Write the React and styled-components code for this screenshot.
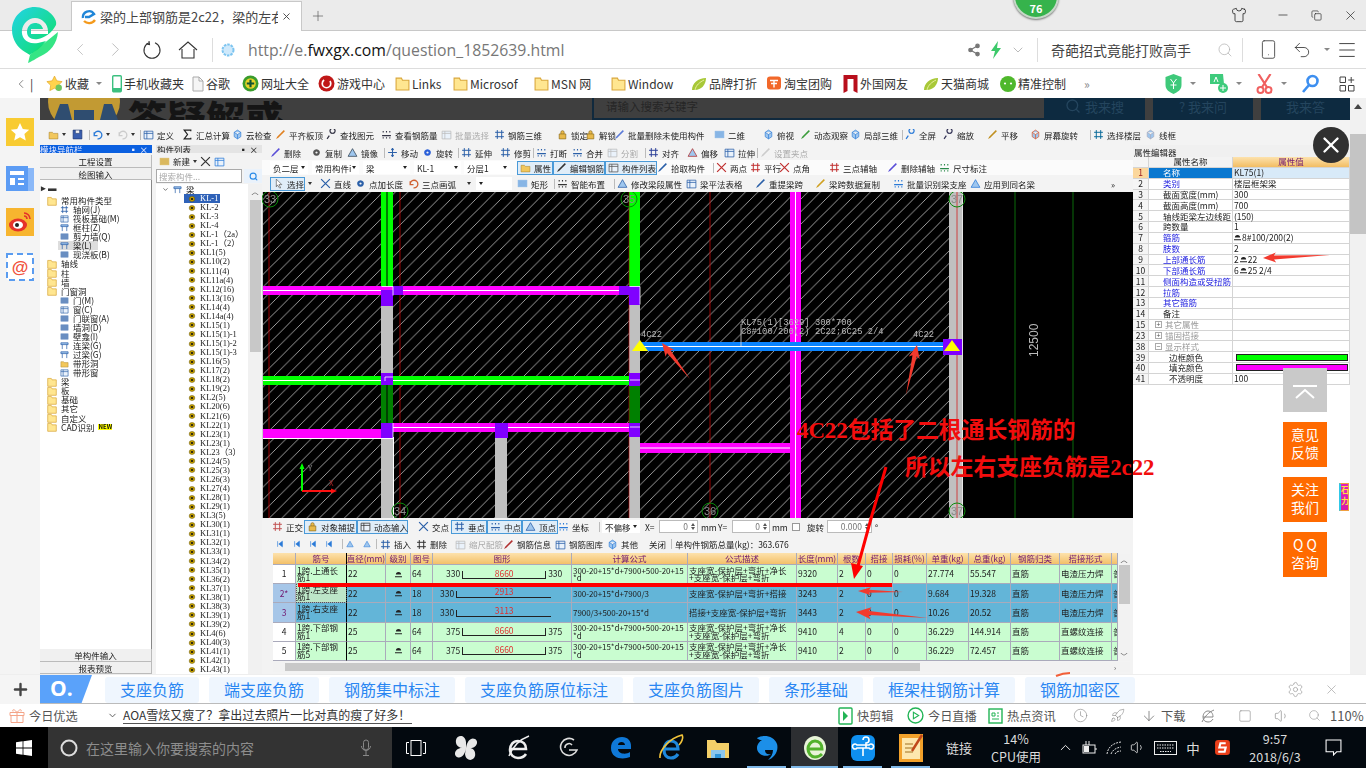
import React from "react";
import styled, { createGlobalStyle } from "styled-components";
import { ChevronLeft, ChevronRight, ChevronDown, Share2, Search, Smartphone, Undo2, Menu, Shirt, Minus, Copy, X, Plus, ArrowDown, Settings, Volume1, Rocket, Square, Clock } from "lucide-react";

const CJK = `"Noto Sans CJK SC", "Noto Sans", sans-serif`;

const GlobalStyle = createGlobalStyle`
  html, body { margin: 0; padding: 0; width: 1366px; height: 768px; overflow: hidden; background: #fff; }
  body { font-family: ${CJK}; }
  * { box-sizing: border-box; }
`;

/* ---------- browser chrome ---------- */
const Page = styled.div`
  position: relative;
  width: 1366px;
  height: 768px;
  display: flex;
  flex-direction: column;
  overflow: hidden;
`;
const TabStrip = styled.div`
  height: 31px;
  flex: none;
  background: #ebebeb;
  border-bottom: 1px solid #c8c8c8;
  display: flex;
  align-items: flex-end;
  padding-left: 71px;
  color: #333;
`;
const Tab = styled.div`
  width: 231px;
  height: 30px;
  margin-bottom: -1px;
  background: #fff;
  border: 1px solid #c8c8c8;
  border-bottom: none;
  display: flex;
  align-items: center;
  padding: 0 9px;
  gap: 3px;
  font-size: 13px;
  span { flex: 1; overflow: hidden; white-space: nowrap; color: #444; }
`;
const NewTab = styled.div`
  margin: 0 0 6px 8px;
  color: #555;
  display: flex;
`;
const WinButtons = styled.div`
  margin-left: auto;
  height: 30px;
  display: flex;
  align-items: center;
  gap: 21px;
  padding-right: 8px;
  color: #222;
  svg:first-child { margin-right: 8px; }
`;
const AddressBar = styled.div`
  height: 38px;
  flex: none;
  background: #fff;
  border-bottom: 1px solid #ddd;
  display: flex;
  align-items: center;
  padding-left: 70px;
  color: #333;
`;
const NavIcon = styled.div`
  width: ${(p) => p.$w}px;
  flex: none;
  display: flex;
  justify-content: center;
  align-items: center;
  color: ${(p) => p.$c || "#333"};
`;
const Divider = styled.div`
  width: 1px;
  height: 24px;
  background: #ddd;
  margin: 0 ${(p) => p.$m || 0}px;
  flex: none;
`;
const Url = styled.div`
  font-family: "Open Sans", ${CJK};
  font-size: 15.8px;
  color: #777;
  width: 715px;
  margin-left: 6px;
  white-space: nowrap;
  b { font-weight: 400; color: #111; }
`;
const HotSearch = styled.div`
  font-size: 14px;
  color: #444;
  width: 165px;
  margin-left: 5px;
  white-space: nowrap;
`;
const Bookmarks = styled.div`
  height: 29px;
  flex: none;
  background: #fff;
  display: flex;
  align-items: center;
  padding-left: 14px;
  font-size: 12px;
  color: #333;
`;
const Bookmark = styled.div`
  width: ${(p) => p.$w}px;
  flex: none;
  display: flex;
  align-items: center;
  gap: 2px;
  white-space: nowrap;
  color: ${(p) => p.$c || "inherit"};
  svg { flex: none; }
`;
const BookmarkTools = styled.div`
  margin-left: auto;
  display: flex;
  align-items: center;
  padding-right: 11px;
`;
const TinyDrop = styled.i`
  width: 0;
  height: 0;
  border-left: 3px solid transparent;
  border-right: 3px solid transparent;
  border-top: 3px solid #888;
  margin: 0 ${(p) => p.$r ?? 14}px 0 ${(p) => p.$l ?? 8}px;
`;

/* ---------- main area ---------- */
const Main = styled.div`
  height: 576px;
  flex: none;
  display: flex;
`;
const SideDock = styled.div`
  width: 40px;
  flex: none;
  background: #f4f4f4;
  display: flex;
  flex-direction: column;
  align-items: center;
  padding-top: 20px;
  gap: 17px;
`;
const PageArea = styled.div`
  width: 1310px;
  flex: none;
  display: flex;
  flex-direction: column;
`;
const PageScroll = styled.div`
  width: 16px;
  flex: none;
  background: #f1f1f1;
  display: flex;
  flex-direction: column;
  align-items: center;
  padding-top: 6px;
`;
const ScrollThumb = styled.div`
  width: 16px;
  height: 100px;
  margin-top: 25px;
  background: #c4c4c4;
`;
const UpTri = styled.i`
  width: 0;
  height: 0;
  border-left: 4px solid transparent;
  border-right: 4px solid transparent;
  border-bottom: 5px solid #444;
`;
const DarkBand = styled.div`
  height: 22px;
  flex: none;
  background: #3f3f3f;
  display: flex;
  overflow: hidden;
  position: relative;
`;
const BandTitle = styled.div`
  width: 160px;
  height: 22px;
  flex: none;
  overflow: hidden;
  font-size: 39px;
  font-weight: 900;
  line-height: 38px;
  color: #151515;
  white-space: nowrap;
`;
const BandSearch = styled.div`
  width: 452px;
  height: 22px;
  flex: none;
  margin-left: 304px;
  border-left: 2px solid #10293d;
  border-bottom: 2px solid #10293d;
  font-size: 11.5px;
  color: #262626;
  padding: 0 0 0 12px;
  white-space: nowrap;
`;
const BandButton = styled.div`
  width: ${(p) => p.$w}px;
  flex: none;
  margin-left: ${(p) => p.$m}px;
  background: #0d2a40;
  color: #24455e;
  font-size: 13px;
  display: flex;
  align-items: flex-start;
  justify-content: center;
  gap: 4px;
  line-height: 18px;
  white-space: nowrap;
`;

/* ---------- the CAD program in the picture ---------- */
const AppWindow = styled.div`
  height: 554px;
  flex: none;
  background: #f3f3f3;
  display: flex;
  flex-direction: column;
  filter: blur(0.35px);
  font-size: 8.5px;
  color: #222;
  overflow: hidden;
`;
const ToolRow = styled.div`
  height: ${(p) => p.$h}px;
  flex: none;
  display: flex;
  align-items: center;
  padding-left: ${(p) => p.$pl || 0}px;
  padding-top: ${(p) => p.$pt || 0}px;
  background: ${(p) => p.$bg || "transparent"};
  white-space: nowrap;
`;
const Tool = styled.div`
  width: ${(p) => p.$w}px;
  height: ${(p) => (p.$on ? "14px" : "auto")};
  flex: none;
  display: flex;
  align-items: center;
  gap: 3px;
  padding-left: ${(p) => (p.$on ? 2 : 0)}px;
  color: ${(p) => (p.$dim ? "#aaa" : "#222")};
  background: ${(p) => (p.$on ? "#e0edf8" : "transparent")};
  border: ${(p) => (p.$on ? "1px solid #4a9ad8" : "none")};
  svg { flex: none; }
`;
const Combo = styled.div`
  width: ${(p) => p.$w}px;
  height: 13px;
  margin-right: ${(p) => p.$m ?? 4}px;
  flex: none;
  background: #fff;
  display: flex;
  align-items: center;
  justify-content: space-between;
  padding: 0 3px;
  &::after {
    content: "";
    border-left: 2.5px solid transparent;
    border-right: 2.5px solid transparent;
    border-top: 3px solid #222;
  }
`;
const AppBody = styled.div`
  flex: 1;
  min-height: 0;
  display: flex;
`;
const NavPanel = styled.div`
  width: 115px;
  flex: none;
  display: flex;
  flex-direction: column;
  padding-right: 3px;
`;
const PanelHead = styled.div`
  height: 8px;
  flex: none;
  line-height: 8px;
  background: ${(p) => (p.$blue ? "#0b60e0" : "#e4e4e4")};
  color: ${(p) => (p.$blue ? "#eef" : "#222")};
  white-space: nowrap;
  overflow: hidden;
  display: flex;
  justify-content: space-between;
  padding: 0 4px 0 ${(p) => (p.$blue ? 0 : 1)}px;
`;
const NavGap = styled.div`
  height: 2px;
  flex: none;
`;
const NavButton = styled.div`
  height: 12.5px;
  flex: none;
  background: #f0f0f0;
  border: 1px solid #bbb;
  border-width: 0 1px 1px 0;
  text-align: center;
  line-height: 12px;
`;
const TreeBox = styled.div`
  flex: 1;
  min-height: 0;
  background: #fff;
  border-right: 1px solid #888;
  padding-top: 2px;
`;
const TreeTools = styled.div`
  height: 14px;
  padding-left: 1px;
  color: #333;
  font-weight: 700;
  line-height: 10px;
`;
const TreeRow = styled.div`
  height: 9.07px;
  display: flex;
  align-items: center;
  gap: 4px;
  padding-left: ${(p) => (p.$lv ? 20 : 7)}px;
  line-height: 9px;
  white-space: nowrap;
  background: ${(p) => (p.$sel ? "linear-gradient(90deg, #fff 18px, #ddd 18px, #ddd 58px, #fff 58px)" : "none")};
  svg { flex: none; }
`;
const NewBadge = styled.em`
  font-style: normal;
  font-size: 6px;
  font-weight: 700;
  color: #111;
  background: #ff0;
  line-height: 6px;
`;
const NavFooter = styled.div`
  height: 25px;
  flex: none;
  display: flex;
  flex-direction: column;
`;
const ListPanel = styled.div`
  width: 107px;
  flex: none;
  display: flex;
  flex-direction: column;
  padding-left: 1px;
`;
const ListTools = styled.div`
  height: 16px;
  flex: none;
  display: flex;
  align-items: center;
  gap: 3px;
  padding-left: 3px;
`;
const ListSearch = styled.div`
  height: 14px;
  flex: none;
  display: flex;
  margin-right: 0;
`;
const SearchInput = styled.div`
  width: 86px;
  background: #fff;
  border: 1px solid #aaa;
  color: #aaa;
  line-height: 12px;
  padding-left: 2px;
`;
const SearchBtn = styled.div`
  flex: 1;
  margin-left: 2px;
  background: #eaf2fb;
  display: flex;
  align-items: center;
  justify-content: center;
  color: #2a8be8;
`;
const ListBody = styled.div`
  flex: 1;
  min-height: 0;
  margin-top: 1px;
  background: #fff;
  display: flex;
  overflow: hidden;
`;
const ListItems = styled.div`
  flex: 1;
  padding-top: 1px;
`;
const ListRoot = styled.div`
  height: 9px;
  display: flex;
  align-items: center;
  gap: 4px;
  padding-left: 6px;
  line-height: 9px;
`;
const ListRow = styled.div`
  height: 9.07px;
  display: flex;
  align-items: center;
  gap: 4px;
  padding-left: 32px;
  line-height: 9px;
  font-family: "Liberation Serif", ${CJK};
  font-size: 8.5px;
  white-space: nowrap;
  span { padding: 0 ${(p) => (p.$sel ? 6 : 0)}px 0 0; color: ${(p) => (p.$sel ? "#fff" : "#222")}; }
  background: ${(p) => (p.$sel ? "linear-gradient(90deg, #fff 28px, #2f62b8 28px, #2f62b8 64px, #fff 64px)" : "none")};
`;
const ListScroll = styled.div`
  width: 14px;
  flex: none;
  background: #f1f1f1;
  padding: 2px 1px;
  display: flex;
  flex-direction: column;
  align-items: center;
`;
const ListThumb = styled.div`
  width: 11px;
  height: 152px;
  margin-top: 4px;
  background: #c8c8c8;
`;
const Center = styled.div`
  width: 871px;
  flex: none;
  display: flex;
  flex-direction: column;
`;
const Canvas = styled.svg`
  width: 871px;
  height: 326px;
  flex: none;
  display: block;
  background: #000;
`;
const NumBox = styled.div`
  width: ${(p) => p.$w}px;
  height: 13px;
  flex: none;
  background: #fff;
  border: 1px solid #bbb;
  color: #777;
  text-align: right;
  padding-right: 9px;
  line-height: 11px;
  margin-right: ${(p) => p.$m ?? 3}px;
  position: relative;
  &::before, &::after {
    content: "";
    position: absolute;
    right: 2px;
    border-left: 2px solid transparent;
    border-right: 2px solid transparent;
  }
  &::before { top: 2px; border-bottom: 3px solid #555; }
  &::after { bottom: 2px; border-top: 3px solid #555; }
`;
const CheckBox = styled.div`
  width: 8px;
  height: 8px;
  border: 1px solid #999;
  background: #fff;
  margin-right: 7px;
  flex: none;
`;
const GridPanel = styled.div`
  flex: 1;
  min-height: 0;
  padding-left: 11px;
  display: flex;
  flex-direction: column;
`;
const GridArea = styled.div`
  height: 108px;
  flex: none;
  display: flex;
  width: 857px;
`;
const Rows = styled.div`
  width: 845px;
  flex: none;
  overflow: hidden;
`;
const Row = styled.div`
  display: grid;
  grid-template-columns: 23px 51px 39px 25px 22px 139px 116px 109px 41px 28px 27px 34px 42px 42px 49px 52px 6px;
  height: ${(p) => (p.$head ? 12 : 19.2)}px;
  background: ${(p) => (p.$head ? "linear-gradient(#fde2ad, #f2bd62)" : p.$blue ? "#63b5d8" : "#c9fdd0")};
  color: ${(p) => (p.$head ? "#701870" : "#222")};
`;
const Cell = styled.div`
  border-right: 1px solid #aab;
  border-bottom: 1px solid #aab;
  border-right-color: ${(p) => (p.$bar ? "#000" : "#aab")};
  display: flex;
  align-items: center;
  justify-content: ${(p) => (p.$mid ? "center" : "flex-start")};
  padding-left: ${(p) => (p.$mid ? 0 : 1)}px;
  line-height: 7.5px;
  font-size: ${(p) => (p.$small ? 8 : 8.5)}px;
  letter-spacing: ${(p) => (p.$small ? "-0.05px" : "0")};
  overflow: hidden;
  white-space: ${(p) => (p.$wrap ? "normal" : "nowrap")};
  word-break: break-all;
  background: ${(p) => p.$bg || "transparent"};
  color: ${(p) => p.$c || "inherit"};
  outline: ${(p) => (p.$focus ? "1px dotted #555" : "none")};
  outline-offset: -1px;
`;
const ShapeCell = styled(Cell)`
  padding: 0 0 0 ${(p) => p.$pl}px;
  gap: 2px;
  justify-content: flex-start;
`;
const Bracket = styled.div`
  width: ${(p) => p.$w}px;
  height: ${(p) => (p.$closed ? 8 : 7)}px;
  flex: none;
  border-left: 1px solid #222;
  border-bottom: 1px solid #222;
  border-right: ${(p) => (p.$closed ? "1px solid #222" : "none")};
  margin-top: ${(p) => (p.$closed ? 1 : 2)}px;
  text-align: center;
  color: #e03030;
  line-height: 6px;
  span { position: relative; top: ${(p) => (p.$closed ? -1 : -3)}px; }
`;
const VScroll = styled.div`
  width: 12px;
  flex: none;
  margin-top: 1px;
  background: #f2f2f2;
  display: flex;
  flex-direction: column;
  align-items: center;
  color: #444;
`;
const VThumb = styled.div`
  width: 11px;
  height: 39px;
  margin-top: 1px;
  background: #c8c8c8;
`;
const Chev = styled.span`
  font-size: 7px;
  line-height: 10px;
  margin-top: ${(p) => (p.$auto ? "auto" : "0")};
  margin-right: ${(p) => p.$mr || 0}px;
  color: #444;
`;
const HScroll = styled.div`
  width: 857px;
  height: 10px;
  flex: none;
  margin-top: 1px;
  background: #f2f2f2;
  display: flex;
  align-items: center;
  padding-left: 12px;
  color: #444;
`;
const HThumb = styled.div`
  width: 635px;
  height: 8px;
  background: #c8c8c8;
  margin-right: auto;
`;
const PropPanel = styled.div`
  width: 217px;
  flex: none;
  background: #fff;
  display: flex;
  flex-direction: column;
`;
const PropHead = styled.div`
  height: 12px;
  flex: none;
  background: #f0f0f0;
  line-height: 10px;
  padding: 2px 0 0 1px;
`;
const PropGrid = styled.div`
  display: grid;
  grid-template-columns: 16px 84px 117px;
  grid-auto-rows: 10.85px;
`;
const PropCell = styled.div`
  border-bottom: 1px solid #d4d4d4;
  border-right: 1px solid #d4d4d4;
  display: flex;
  align-items: center;
  justify-content: ${(p) => (p.$mid ? "center" : "flex-start")};
  padding-left: ${(p) => (p.$mid ? 0 : p.$pl ?? 1)}px;
  gap: ${(p) => p.$gap ?? 3}px;
  line-height: 9px;
  white-space: nowrap;
  color: ${(p) => p.$c || "#222"};
  background: ${(p) => p.$bg || "transparent"};
`;
const PlusBox = styled.i`
  width: 7px;
  height: 7px;
  margin-left: -8px;
  border: 1px solid #aaa;
  font-style: normal;
  font-size: 7px;
  line-height: 5px;
  text-align: center;
  color: #555;
  flex: none;
`;
const Swatch = styled.div`
  width: 112px;
  height: 7px;
  background: ${(p) => p.$c};
  border: 1px solid #222;
`;
const Mark = styled.svg`
  width: 7px;
  height: 7px;
  flex: none;
`;

/* ---------- bottom browser bars ---------- */
const RelatedBar = styled.div`
  height: 30px;
  flex: none;
  background: #fff;
  border-top: 1px solid #eee;
  border-bottom: 1px solid #bbb;
  display: flex;
  align-items: stretch;
  position: relative;
`;
const PlusCell = styled.div`
  width: 40px;
  background: #f5f5f5;
  display: flex;
  align-items: center;
  justify-content: center;
  color: #444;
  margin-bottom: -1px;
`;
const SoBrand = styled.div`
  width: 52px;
  background: #5aa2fa;
  clip-path: polygon(0 0, 100% 0, 80% 100%, 0 100%);
  color: #fff;
  font-size: 21px;
  font-weight: 700;
  line-height: 27px;
  padding-left: 10px;
  font-family: "Open Sans", sans-serif;
`;
const Chips = styled.div`
  display: flex;
  gap: 10px;
  margin-left: 13px;
  padding-top: 2px;
`;
const Chip = styled.div`
  font-size: 16px;
  line-height: 25px;
  height: 26px;
  padding: 0 15px;
  background: #eff6fe;
  color: #2a86f2;
  border-radius: 3px;
  white-space: nowrap;
`;
const RelatedTools = styled.div`
  margin-left: auto;
  display: flex;
  align-items: center;
  gap: 20px;
  padding-right: 27px;
  color: #aaa;
`;
const StatusBar = styled.div`
  height: 23px;
  flex: none;
  background: #fff;
  display: flex;
  align-items: center;
  font-size: 12.2px;
  color: #555;
  padding-left: 9px;
  white-space: nowrap;
`;
const Headline = styled.a`
  width: 289px;
  flex: none;
  color: #333;
  border-bottom: 1px solid #555;
  line-height: 16px;
  font-size: 12px;
`;
const StatusGap = styled.div`
  width: 426px;
  flex: none;
`;
const StatusItem = styled.div`
  width: ${(p) => p.$w}px;
  flex: none;
  display: flex;
  align-items: center;
  gap: 4px;
  padding-left: ${(p) => p.$pl || 0}px;
  color: ${(p) => p.$c || "inherit"};
  font-size: ${(p) => p.$f || 12.2}px;
  svg { flex: none; }
`;
const Taskbar = styled.div`
  height: 41px;
  flex: none;
  background: #03090f;
  display: flex;
  align-items: center;
  color: #e8e8e8;
  white-space: nowrap;
`;
const StartCell = styled.div`
  width: 48px;
  height: 41px;
  flex: none;
  background: #000;
  display: flex;
  align-items: center;
  justify-content: center;
`;
const TaskSearch = styled.div`
  width: 344px;
  height: 41px;
  flex: none;
  background: #333;
  display: flex;
  align-items: center;
  padding-left: 12px;
  color: #8d8d8d;
  font-size: 14px;
  gap: 8px;
`;
const TaskHint = styled.span`
  width: 267px;
  flex: none;
`;
const TaskIcon = styled.div`
  width: ${(p) => p.$w}px;
  height: 41px;
  flex: none;
  display: flex;
  align-items: center;
  justify-content: center;
  margin-left: ${(p) => p.$m || 0}px;
  background: ${(p) => (p.$on ? "#2d2f32" : "transparent")};
  position: relative;
  &::after {
    content: "";
    display: ${(p) => (p.$line ? "block" : "none")};
    position: absolute;
    left: 0;
    right: 0;
    bottom: 0;
    height: 2px;
    background: #7fb8e8;
  }
`;
const TaskText = styled.div`
  width: ${(p) => p.$w}px;
  flex: none;
  text-align: center;
  font-size: ${(p) => p.$f || 13}px;
  line-height: ${(p) => p.$lh || 18}px;
  color: #dcdcdc;
`;

/* ---------- things lying over the page ---------- */
const LogoWrap = styled.div`
  position: absolute;
  left: 12px;
  top: 7px;
  width: 46px;
  height: 56px;
`;
const ScoreBadge = styled.div`
  position: absolute;
  left: 1013px;
  top: -27px;
  width: 46px;
  height: 46px;
  border-radius: 50%;
  background: #36b34c;
  border: 2px solid #c6d8c8;
  box-shadow: 0 1px 2px #777;
  color: #fff;
  font-size: 11px;
  font-weight: 700;
  text-align: center;
  padding-top: 26px;
  line-height: 14px;
`;
const CloseButton = styled.div`
  position: absolute;
  left: 1313px;
  top: 127px;
  width: 36px;
  height: 36px;
  border-radius: 50%;
  background: #303030;
  display: flex;
  align-items: center;
  justify-content: center;
  color: #fff;
`;
const FloatDock = styled.div`
  position: absolute;
  left: 1283px;
  top: 368px;
  width: 44px;
  display: flex;
  flex-direction: column;
  gap: 10px;
`;
const TopButton = styled.div`
  height: 44px;
  background: #c9c9c9;
  display: flex;
  flex-direction: column;
  align-items: center;
  justify-content: center;
  padding-top: 4px;
`;
const OrangeButton = styled.div`
  height: 45px;
  background: #ff6a00;
  color: #fff;
  font-size: 14px;
  line-height: 18px;
  text-align: center;
  padding-top: 3px;
  white-space: pre-line;
`;
const EdgeAd = styled.div`
  position: absolute;
  left: 1339px;
  top: 483px;
  width: 10px;
  height: 28px;
  background: linear-gradient(#e020c0, #d818a8);
  border: 1px solid #f0a040;
  border-left: 2px solid #30c8e8;
  color: #ffe040;
  font-size: 8px;
  font-weight: 700;
  line-height: 11px;
  text-align: center;
  overflow: hidden;
`;
const Overlay = styled.svg`
  position: absolute;
  left: 0;
  top: 0;
  width: 1366px;
  height: 768px;
  pointer-events: none;
`;
const RedNote = styled.div`
  position: absolute;
  left: ${(p) => p.$x}px;
  top: ${(p) => p.$y}px;
  font-size: 22.8px;
  line-height: 26px;
  font-weight: 700;
  color: #f20d0d;
  white-space: nowrap;
  font-family: "Liberation Serif", ${CJK};
`;

/* ---------- small drawings ---------- */
const glyphPaths = {
  box: <rect x="1" y="2" width="8" height="6" fill="currentColor" opacity=".7" stroke="currentColor" strokeWidth=".6" />,
  folder: <path d="M1 3h3l1 1h4v5H1z" fill="#f2c75c" stroke="#a8822a" strokeWidth=".5" />,
  save: <path d="M1 1h8v8H1z M3 1v3h4V1" fill="#3a5fb0" stroke="#1d3570" strokeWidth=".6" />,
  undo: <path d="M2 6a3.5 3.5 0 1 1 3 3M2 3v3h3" fill="none" stroke="currentColor" strokeWidth="1.2" />,
  lens: <path d="M6 4a2.3 2.3 0 1 0-.1 0M3 6l-2 3" fill="none" stroke="currentColor" strokeWidth="1.1" />,
  lines: <path d="M1 3h8M1 7h8M3 1v8M7 1v8" fill="none" stroke="currentColor" strokeWidth=".9" />,
  move: <path d="M5 1v8M1 5h8M5 1 4 2.5h2zM5 9 4 7.5h2z" fill="none" stroke="currentColor" strokeWidth=".9" />,
  cube: <path d="M2 3l3-2 3 2v4L5 9 2 7zM2 3l3 2 3-2M5 5v4" fill="#9ec6ee" stroke="currentColor" strokeWidth=".6" />,
  pencil: <path d="M1 9l2-1 6-6-1-1-6 6z" fill="currentColor" />,
  lock: <path d="M2 4.5h6V9H2zM3.5 4.5V3a1.5 1.5 0 0 1 3 0v1.5" fill="#e8b94a" stroke="#8a6a1a" strokeWidth=".6" />,
  arrow: <path d="M3 1l5 5H5.4L7 9H5.8L4 6.3 3 8z" fill="#fff" stroke="#555" strokeWidth=".6" />,
  dots: <path d="M1.5 2.5h1M4.5 2.5h1M7.5 2.5h1M1 6h8M1.5 8h1M4.5 8h1M7.5 8h1" fill="none" stroke="currentColor" strokeWidth="1.2" />,
  cross: <path d="M1 1l8 8M9 1 1 9" fill="none" stroke="currentColor" strokeWidth="1.1" />,
  sigma: <path d="M8 2V1H2l3 4-3 4h6V8" fill="none" stroke="currentColor" strokeWidth="1.1" />,
  table: <path d="M1 2h8v7H1zM1 4h8M3.5 2v7" fill="#eaf2fb" stroke="currentColor" strokeWidth=".7" />,
  gear: <path d="M5 2a3 3 0 1 0 .01 0M5 4a1 1 0 1 0 .01 0" fill="currentColor" fillRule="evenodd" />,
  tri: <path d="M1 8.5 5 1.5l4 7z" fill="#9ec6ee" stroke="currentColor" strokeWidth=".7" />,
  nav: <path d="M2 1.5v7M3.5 5 8 1.5v7z" fill="currentColor" stroke="currentColor" strokeWidth=".8" />,
  beam: <path d="M1 2h8v2H1zM2.5 4v5M7.5 4v5" fill="#9ec6ee" stroke="currentColor" strokeWidth=".8" />,
  ring: <><rect x="1.5" y="2" width="7" height="6" rx="3" fill="#c8a200" stroke="#5c4c00" strokeWidth=".6" /><rect x="3.6" y="4" width="2.8" height="2" fill="#111" /></>,
};
const Glyph = ({ k, c = "#2a5fa8", s = 11 }) => (
  <svg width={s} height={s} viewBox="0 0 10 10" style={{ color: c }}>{glyphPaths[k]}</svg>
);
const Sep = styled.i`
  width: 1px;
  height: 10px;
  background: #bbb;
  margin: 0 ${(p) => p.$m ?? 3}px;
  flex: none;
`;
const DropMark = styled.i`
  border-left: 2.5px solid transparent;
  border-right: 2.5px solid transparent;
  border-top: 3px solid #333;
  flex: none;
  margin: 0 ${(p) => p.$r || 0}px 0 ${(p) => p.$l || 0}px;
`;

const Grade = () => (
  <Mark viewBox="0 0 8 8"><path d="M1 4a3 3 0 0 1 6 0zM0 6h8v1H0z" fill="#222" /></Mark>
);

const Folder = ({ s = 13 }) => (
  <svg width={s} height={s} viewBox="0 0 14 14"><path d="M1 2h5l1 2h6v9H1z" fill="#ffe690" stroke="#d9a63a" /></svg>
);
const Leaf = () => (
  <svg width="16" height="16" viewBox="0 0 16 16"><path d="M1 14C1 7 7 2 15 2c0 7-5 12-11 12z" fill="#a8c838" /><path d="M4 14C5 9 9 6 13 4" stroke="#e8f0a0" fill="none" /></svg>
);

function Logo() {
  return (
    <LogoWrap>
      <svg width="46" height="56" viewBox="0 0 46 56">
        <defs>
          <linearGradient id="lg" x1="0" y1="0" x2="1" y2="1">
            <stop offset="0" stopColor="#22d3e8" />
            <stop offset="1" stopColor="#0fe05f" />
          </linearGradient>
        </defs>
        <path d="M23 0C10 0 0 10 0 23c0 10 6 18 13 22l5 3c4-3 10-6 16-14l-8 2c-12 2-17-6-16-13 1-6 6-12 13-12s13 6 13 13v3H19v-5h12c-1-4-4-6-8-6-5 0-8 4-8 9s4 8 11 7c6-1 14-6 18-14C46 12 36 0 23 0z" fill="url(#lg)" />
        <path d="M18 48 30 38 46 25c-1 12-8 20-17 24-4 2-10 6-13 7z" fill="#12e070" opacity=".85" />
      </svg>
    </LogoWrap>
  );
}

function TopBars() {
  return (
    <>
      <TabStrip>
        <Tab>
          <svg width="16" height="16" viewBox="0 0 16 16">
            <path d="M2 9a6 6 0 0 1 11-4L8 8H4" fill="none" stroke="#1f86d8" strokeWidth="2.4" />
            <path d="M3 12c3 3 8 3 11-1" fill="none" stroke="#f49a1c" strokeWidth="2.4" />
          </svg>
          <span>梁的上部钢筋是2c22，梁的左右支</span>
          <X size={11} color="#444" />
        </Tab>
        <NewTab><Plus size={16} strokeWidth={1} /></NewTab>
        <WinButtons>
          <Shirt size={16} strokeWidth={1.2} />
          <Minus size={14} strokeWidth={1.2} />
          <Copy size={11} strokeWidth={1.4} />
          <X size={15} strokeWidth={1.1} />
        </WinButtons>
      </TabStrip>
      <AddressBar>
        <NavIcon $w={20} $c="#bbb"><ChevronLeft size={23} strokeWidth={1} /></NavIcon>
        <NavIcon $w={50} $c="#bbb"><ChevronRight size={23} strokeWidth={1} /></NavIcon>
        <NavIcon $w={24}>
          <svg width="20" height="20" viewBox="0 0 20 20"><path d="M7 2.8A8 8 0 1 0 13 2.8M7 1l.5 3.5L4 4" fill="none" stroke="#333" strokeWidth="1.1" /></svg>
        </NavIcon>
        <NavIcon $w={48}>
          <svg width="20" height="20" viewBox="0 0 20 20"><path d="M1 10 10 2l9 8M4 9v9h12V9" fill="none" stroke="#333" strokeWidth="1.1" /></svg>
        </NavIcon>
        <Divider />
        <NavIcon $w={29}>
          <svg width="16" height="16" viewBox="0 0 16 16"><circle cx="8" cy="8" r="5.5" fill="#cfe9fb" stroke="#7cc4f0" strokeWidth="2" strokeDasharray="2.5 1" /></svg>
        </NavIcon>
        <Url>http://e.<b>fwxgx.com</b>/question_1852639.html</Url>
        <NavIcon $w={22} $c="#777"><Share2 size={14} fill="#777" /></NavIcon>
        <NavIcon $w={22}>
          <svg width="12" height="18" viewBox="0 0 12 18"><path d="M8 0 1 10h4l-2 8 8-11H7z" fill="#3cc96a" /></svg>
        </NavIcon>
        <NavIcon $w={22} $c="#999"><ChevronDown size={16} strokeWidth={1} /></NavIcon>
        <Divider $m={8} />
        <HotSearch>奇葩招式竟能打败高手</HotSearch>
        <NavIcon $w={18} $c="#aaa"><Search size={16} strokeWidth={1} /></NavIcon>
        <Divider $m={8} />
        <NavIcon $w={34} $c="#444"><Smartphone size={21} strokeWidth={1} /></NavIcon>
        <NavIcon $w={34} $c="#333"><Undo2 size={20} strokeWidth={1} /></NavIcon>
        <NavIcon $w={44} $c="#333"><TinyDrop $l={0} $r={6} /><Menu size={22} strokeWidth={1} /></NavIcon>
      </AddressBar>
      <Bookmarks>
        <Bookmark $w={32}><ChevronLeft size={14} strokeWidth={1} />|</Bookmark>
        <Bookmark $w={66}>
          <svg width="17" height="17" viewBox="0 0 16 16"><path d="M8 1l2.2 4.5 5 .7-3.6 3.5.8 5L8 12.4l-4.4 2.3.8-5L.8 6.2l5-.7z" fill="#ffd34d" stroke="#e0a020" strokeWidth=".6" /><circle cx="12" cy="12" r="3" fill="#6ec45e" /></svg>
          收藏
          <TinyDrop $l={5} $r={0} />
        </Bookmark>
        <Bookmark $w={80}>
          <svg width="10" height="18" viewBox="0 0 10 18"><rect x=".7" y=".7" width="8.6" height="16" rx="1" fill="#fff" stroke="#3cc080" strokeWidth="1.4" /><rect x="1" y="13" width="8" height="4" fill="#3cc080" /></svg>
          手机收藏夹
        </Bookmark>
        <Bookmark $w={50}>
          <svg width="12" height="16" viewBox="0 0 12 16"><path d="M1 1h6l4 4v10H1zM7 1v4h4" fill="#f5f5f5" stroke="#aaa" /></svg>
          谷歌
        </Bookmark>
        <Bookmark $w={76}>
          <svg width="17" height="17" viewBox="0 0 16 16"><circle cx="8" cy="8" r="7.500" fill="#3a9c2c" /><circle cx="8" cy="8" r="5" fill="#e8d428" /><path d="M8 4.500v7M4.500 8h7" stroke="#153" strokeWidth="2" /></svg>
          网址大全
        </Bookmark>
        <Bookmark $w={77}>
          <svg width="17" height="17" viewBox="0 0 16 16"><circle cx="8" cy="8" r="7.500" fill="#c01818" /><circle cx="8" cy="8" r="4" fill="none" stroke="#fff" strokeWidth="1.6" strokeDasharray="16 6" /></svg>
          游戏中心
        </Bookmark>
        <Bookmark $w={58}><Folder s={15} />Links</Bookmark>
        <Bookmark $w={81}><Folder s={15} />Microsof</Bookmark>
        <Bookmark $w={77}><Folder s={15} />MSN 网</Bookmark>
        <Bookmark $w={80}><Folder s={15} />Window</Bookmark>
        <Bookmark $w={75}><Leaf />品牌打折</Bookmark>
        <Bookmark $w={77}>
          <svg width="16" height="17" viewBox="0 0 16 16"><rect x="1" y="1" width="14" height="13" rx="3" fill="#f2682a" /><path d="M4 5h8M5 8h6M8 5v7" stroke="#fff" strokeWidth="1.4" /></svg>
          淘宝团购
        </Bookmark>
        <Bookmark $w={80}>
          <svg width="15" height="18" viewBox="0 0 14 18"><path d="M0 0h14v18l-4-2V4H4v12l-4 2z" fill="#b80f1c" /></svg>
          外国网友
        </Bookmark>
        <Bookmark $w={77}><Leaf />天猫商城</Bookmark>
        <Bookmark $w={84}>
          <svg width="16" height="16" viewBox="0 0 16 16"><circle cx="8" cy="8" r="8" fill="#4fb82c" /><circle cx="5" cy="7.500" r="1.100" fill="#fff" /><circle cx="11" cy="7.500" r="1.100" fill="#fff" /></svg>
          精准控制
        </Bookmark>
        <Bookmark $w={12} $c="#888">»</Bookmark>
        <BookmarkTools>
          <svg width="17" height="20" viewBox="0 0 16 20"><path d="M8 0l8 3v8c0 5-4 7-8 9-4-2-8-4-8-9V3z" fill="#3ec97a" /><path d="M5 5l3 4 3-4M8 9v6M5 11h6" stroke="#fff" fill="none" /></svg>
          <TinyDrop />
          <svg width="18" height="20" viewBox="0 0 18 20"><path d="M0 0h13l1 10H0z" fill="#3ecb7c" /><path d="M4 8l2-5 2 5" stroke="#fff" fill="none" /><circle cx="13" cy="14" r="5" fill="#3ecb7c" /><path d="M10 14h6M13 11v6" stroke="#fff" /></svg>
          <TinyDrop />
          <svg width="17" height="20" viewBox="0 0 16 20"><path d="M2 0l9 14M14 0 5 14" stroke="#f06060" strokeWidth="2.200" /><circle cx="4" cy="16" r="3" fill="none" stroke="#f06060" strokeWidth="2" /><circle cx="12" cy="16" r="3" fill="none" stroke="#f06060" strokeWidth="2" /></svg>
          <TinyDrop />
          <svg width="18" height="20" viewBox="0 0 18 20"><circle cx="11.500" cy="7" r="5" fill="none" stroke="#3d8ff0" strokeWidth="2.600" /><path d="M8 11 2 18" stroke="#3d8ff0" strokeWidth="2.600" /></svg>
          <TinyDrop $l={0} $r={14} style={{ visibility: "hidden" }} />
          <svg width="16" height="16" viewBox="0 0 16 16"><path d="M1 1h5.500v5.500H1zM1 9.500h5.500V15H1zM9.500 9.500H15V15H9.500zM12.200 1v6M9.200 4h6" fill="none" stroke="#444" /></svg>
        </BookmarkTools>
      </Bookmarks>
    </>
  );
}

function Dock() {
  return (
    <SideDock>
      <svg width="28" height="28" viewBox="0 0 28 28"><rect width="28" height="28" fill="#f8cb32" /><path d="M14 5l2.800 6 6.400.7-4.800 4.400 1.400 6.400-5.800-3.300-5.800 3.300 1.400-6.400-4.800-4.400 6.400-.7z" fill="#fff" /></svg>
      <svg width="28" height="28" viewBox="0 0 28 28"><path d="M0 3h22v25H0z" fill="#5c9cf4" /><path d="M22 5h6v23h-6z" fill="#8ab8f8" /><path d="M4 8h14v4H4zM4 15h5v7H4zM12 15h6v2h-6zM12 20h6v2h-6z" fill="#fff" /></svg>
      <svg width="28" height="28" viewBox="0 0 28 28"><rect width="28" height="28" fill="#f7b52f" /><ellipse cx="12" cy="17" rx="9" ry="6.500" fill="#e6322a" /><ellipse cx="12" cy="17" rx="5" ry="3.800" fill="#fff" /><circle cx="11" cy="17" r="2" fill="#222" /><path d="M18 5a6 6 0 0 1 6 6M18 8a3 3 0 0 1 3 3" stroke="#e6322a" strokeWidth="1.600" fill="none" /></svg>
      <svg width="28" height="28" viewBox="0 0 28 28"><rect x="1" y="1" width="26" height="26" fill="#fff" stroke="#5a9cf0" strokeWidth="2" strokeDasharray="6 4" /><text x="14" y="20" textAnchor="middle" fontSize="17" fontWeight="700" fill="#f0513c" fontFamily="Liberation Sans, sans-serif">@</text></svg>
    </SideDock>
  );
}

const SEP = ["sep"];
const row1 = [
  ["folder", "", "", 24, 0], ["save", "", "", 15, 0], SEP, ["undo", "#2a7ad8", "", 25, 0], ["undo", "#ccc", "", 21, 0], SEP,
  ["table", "#2a5fa8", "定义", 39], ["sigma", "#222", "汇总计算", 50], ["cube", "#2a7ad8", "云检查", 43], ["pencil", "#e08020", "平齐板顶", 51],
  ["lens", "#334", "查找图元", 55], ["dots", "#334", "查看钢筋量", 60], ["table", "#bbb", "批量选择", 53, 1], ["lines", "#2a5fa8", "钢筋三维", 63],
  ["lock", "", "锁定", 28], ["lock", "", "解锁", 29], ["pencil", "#5a7ad8", "批量删除未使用构件", 100], ["box", "#5a9ce0", "二维", 49],
  ["cube", "#2a7ad8", "俯视", 37], ["pencil", "#3a9c3a", "动态观察", 50], ["cube", "#2a7ad8", "局部三维", 50], SEP, ["lens", "#2a7ad8", "全屏", 38],
  ["lens", "#335", "缩放", 44], ["pencil", "#c09020", "平移", 43], ["cube", "#e05020", "屏幕旋转", 58], SEP, ["lines", "#0a6a9a", "选择楼层", 52], ["cube", "#aab", "线框", 40],
];
const row2 = [
  ["pencil", "#5a4fd8", "删除", 41], ["gear", "#555", "复制", 36], ["tri", "#345", "镜像", 35], SEP, ["move", "#2a5fa8", "移动", 35], ["gear", "#2a5fd8", "旋转", 34], SEP,
  ["lines", "#2a5fa8", "延伸", 39], ["lines", "#2a5fa8", "修剪", 31], SEP, ["dots", "#2a5fa8", "打断", 36], ["dots", "#2a5fa8", "合并", 35], ["table", "#bbb", "分割", 36, 1], SEP,
  ["lines", "#2a3f98", "对齐", 39], ["tri", "#b03030", "偏移", 37], ["table", "#2a5fa8", "拉伸", 31], SEP, ["pencil", "#ccc", "设置夹点", 50, 1],
];
const row3b = [
  ["folder", "", "属性", 36, 0, 1], ["pencil", "#333", "编辑钢筋", 52, 0, 1], ["table", "#555", "构件列表", 52, 0, 1], ["pencil", "#2a5fa8", "拾取构件", 54], SEP,
  ["cross", "#c03030", "两点", 34], ["lines", "#c03030", "平行", 29], ["cross", "#c03030", "点角", 50], ["lines", "#c03030", "三点辅轴", 58], ["pencil", "#5a4fd8", "删除辅轴", 52], ["dots", "#2a8a4a", "尺寸标注", 62],
];
const row4a = [
  ["arrow", "", "选择", 35, 0, 1],
];
const row4b = [
  ["cross", "#2a5fa8", "直线", 35], ["gear", "#2a5fa8", "点加长度", 53], ["undo", "#d06030", "三点画弧", 59],
];
const row4c = [
  ["box", "#5a9ce0", "矩形", 35], SEP, ["dots", "#333", "智能布置", 55], SEP, ["tri", "#2a5fa8", "修改梁段属性", 69], ["table", "#2a5fa8", "梁平法表格", 69], ["pencil", "#2a5fa8", "重提梁跨", 60],
  ["pencil", "#d0a020", "梁跨数据复制", 78], ["dots", "#2a7ad8", "批量识别梁支座", 77], ["tri", "#2a7ad8", "应用到同名梁", 141],
];
const snapA = [
  ["lines", "#c05050", "正交", 32], ["lock", "", "对象捕捉", 53, 0, 1], ["table", "#333", "动态输入", 51, 0, 1],
];
const snapB = [
  ["cross", "#2a5fa8", "交点", 33], ["lines", "#2a5fa8", "垂点", 36, 0, 1], ["dots", "#2a5fa8", "中点", 35, 0, 1], ["tri", "#2a5fa8", "顶点", 36, 0, 1], ["dots", "#2a7ad8", "坐标", 39], SEP,
];
const gridTools = [
  ["lines", "#2a5fa8", "插入", 36], ["lines", "#333", "删除", 39], ["table", "#bbb", "缩尺配筋", 48, 1], ["pencil", "#b03030", "钢筋信息", 52], ["table", "#2a5fa8", "钢筋图库", 52],
  ["cube", "#2a7ad8", "其他", 42],
];
const renderTools = (items) =>
  items.map(([k, c, t, w, dim, on], i) =>
    k === "sep" ? (
      <Sep key={i} $m={2} />
    ) : (
      <Tool key={i} $w={w} $dim={dim} $on={on}>
        <Glyph k={k} c={c || undefined} />{t}{w > 20 && !t ? <DropMark /> : null}
      </Tool>
    )
  );

const treeItems = [
  [0, "常用构件类型", 1], [1, "轴网(J)", "lines"], [1, "筏板基础(M)", "table"], [1, "框柱(Z)", "beam"], [1, "剪力墙(Q)", "box"], [1, "梁(L)", "beam"], [1, "现浇板(B)", "box"],
  [0, "轴线"], [0, "柱"], [0, "墙"], [0, "门窗洞", 1], [1, "门(M)", "box"], [1, "窗(C)", "table"], [1, "门联窗(A)", "box"], [1, "墙洞(D)", "box"], [1, "壁龛(I)", "box"],
  [1, "连梁(G)", "beam"], [1, "过梁(G)", "beam"], [1, "带形洞", "folder"], [1, "带形窗", "table"], [0, "梁"], [0, "板"], [0, "基础"], [0, "其它"], [0, "自定义"],
];
const kls = ["KL-1", "KL-2", "KL-3", "KL-4", "KL-1（2a）", "KL-1（2）", "KL1(5)", "KL10(2)", "KL11(4)", "KL11a(4)", "KL12(16)", "KL13(16)", "KL14(4)", "KL14a(4)", "KL15(1)", "KL15(1)-1", "KL15(1)-2", "KL15(1)-3", "KL16(5)", "KL17(2)", "KL18(2)", "KL19(2)", "KL2(5)", "KL20(6)", "KL21(6)", "KL22(1)", "KL23(1)", "KL23(1)", "KL23（3）", "KL24(5)", "KL25(3)", "KL26(3)", "KL27(4)", "KL28(1)", "KL29(1)", "KL3(5)", "KL30(1)", "KL31(1)", "KL32(1)", "KL33(1)", "KL34(2)", "KL35(1)", "KL36(2)", "KL37(1)", "KL38(1)", "KL38(3)", "KL39(1)", "KL39(2)", "KL4(6)", "KL40(3)", "KL41(1)", "KL42(1)", "KL43(1)"];

function LeftPanels() {
  return (
    <>
      <NavPanel>
        <PanelHead $blue><span>模块导航栏</span><span>▪ ×</span></PanelHead>
        <NavGap />
        <NavButton>工程设置</NavButton>
        <NavButton>绘图输入</NavButton>
        <TreeBox>
          <TreeTools>▸ ▬</TreeTools>
          {treeItems.map(([lv, t, x], i) => (
            <TreeRow key={i} $lv={lv} $sel={t === "梁(L)"}>
              {lv ? <Glyph k={x} s={9} /> : <Folder s={10} />}
              {t}
            </TreeRow>
          ))}
          <TreeRow $lv={0}><Folder s={10} />CAD识别 <NewBadge>NEW</NewBadge></TreeRow>
        </TreeBox>
        <NavFooter>
          <NavButton>单构件输入</NavButton>
          <NavButton>报表预览</NavButton>
        </NavFooter>
      </NavPanel>
      <ListPanel>
        <PanelHead><span>构件列表</span><span>▪ ×</span></PanelHead>
        <ListTools>
          <Glyph k="box" c="#d0a020" />新建<DropMark /><Glyph k="cross" c="#333" /> <Glyph k="table" c="#2a7ad8" />
        </ListTools>
        <ListSearch>
          <SearchInput>搜索构件...</SearchInput>
          <SearchBtn><Search size={9} strokeWidth={3} /></SearchBtn>
        </ListSearch>
        <ListBody>
          <ListItems>
            <ListRoot><ChevronDown size={7} /><Glyph k="beam" s={9} />梁</ListRoot>
            {kls.map((k, i) => (
              <ListRow key={i} $sel={i === 0}><Glyph k="ring" s={8} /><span>{k}</span></ListRow>
            ))}
          </ListItems>
          <ListScroll>
            <Chev>︿</Chev>
            <ListThumb />
          </ListScroll>
        </ListBody>
      </ListPanel>
    </>
  );
}

const Beam = ({ x, y, w, h, c, line = true }) => (
  <>
    <rect x={x} y={y} width={w} height={h} fill={c} />
    {line ? <path d={`M${x} ${y + h / 2}h${w}`} stroke="#fff" strokeWidth="1" /> : null}
  </>
);
const Col = ({ x, y, w, h, c, line = true }) => (
  <>
    <rect x={x} y={y} width={w} height={h} fill={c} />
    {line ? <path d={`M${x + w / 2} ${y}v${h}`} stroke="#000" strokeWidth="1" /> : null}
  </>
);
const Axis = ({ x, y, t }) => (
  <g>
    <circle cx={x} cy={y} r="8" fill="none" stroke="#0a8a0a" strokeWidth="1" />
    <text x={x} y={y + 4} textAnchor="middle" fontSize="11" fill="#8a8a8a" fontFamily="Liberation Sans, sans-serif">{t}</text>
  </g>
);
const CadText = ({ x, y, children, s = 8.8 }) => (
  <text x={x} y={y} fontSize={s} fill="#bbb" fontFamily="Liberation Mono, monospace">{children}</text>
);

function Drawing() {
  const purple = "#8000ff";
  const mag = "#ff00ff";
  const green = "#00ff00";
  const gray = "#c0c0c0";
  return (
    <Canvas viewBox="262 192 871 326">
      <defs>
        <pattern id="hatch" width="12.5" height="12.5" patternUnits="userSpaceOnUse">
          <path d="M-1 13.5 13.5 -1" stroke="#c4c4c4" strokeWidth=".8" />
        </pattern>
      </defs>
      <rect x="262" y="192" width="1" height="326" fill="#ccc" />
      <rect x="263" y="192" width="686" height="326" fill="url(#hatch)" />
      {/* axis lines */}
      {[269, 400, 710, 957].map((x) => <path key={x} d={`M${x} 192v326`} stroke="#c00000" strokeWidth=".8" />)}
      <path d="M1015 192v326M1073 192v326" stroke="#0a6a0a" strokeWidth="1" />
      {/* columns */}
      <Col x={381} y={192} w={12} h={95} c={green} />
      <rect x={381} y={306} width={12} height={67} fill={gray} />
      <Col x={381} y={385} w={12} h={39} c="#008000" />
      <rect x={381} y={437} width={12} height={81} fill={gray} />
      <rect x={393} y={437} width={1} height={81} fill="#fff" />
      <Col x={629} y={192} w={11} h={95} c={green} line={false} />
      <rect x={629} y={305} width={11} height={68} fill={gray} />
      <rect x={629} y={386} width={11} height={37} fill="#008000" />
      <rect x={629} y={436} width={11} height={82} fill={gray} />
      <path d="M629 192v326" stroke="#c00000" strokeWidth=".6" />
      <rect x={495} y={437} width={12} height={81} fill={gray} />
      <rect x={949} y={192} width={14} height={326} fill={gray} />
      <path d="M957 192v326" stroke="#d02020" strokeWidth=".8" />
      <path d="M962.5 192v326" stroke="#fff" strokeWidth=".6" />
      <Beam x={790} y={192} w={11} h={326} c={mag} line={false} />
      <path d="M795.5 192v326" stroke="#fff" strokeWidth="1" />
      {/* beams */}
      <Beam x={263} y={286} w={366} h={9} c={mag} />
      <Beam x={263} y={376} w={366} h={9} c={green} />
      <rect x={263} y={429} width={118} height={9} fill={mag} />
      <path d="M263 438.5h130" stroke="#fff" strokeWidth="1" />
      <Beam x={393} y={423} w={236} h={9} c={mag} />
      <Beam x={640} y={443} w={150} h={10} c={mag} />
      <Beam x={640} y={342} w={308} h={9} c="#0a84ff" />
      {/* column heads */}
      {[[381, 290, 12, 16], [393, 286, 10, 9], [619, 286, 21, 9], [629, 291, 11, 14], [381, 373, 12, 12], [629, 373, 11, 13], [381, 423, 12, 15], [629, 423, 11, 14], [495, 423, 13, 15], [943, 339, 19, 16]].map(([x, y, w, h], i) => (
        <rect key={i} x={x} y={y} width={w} height={h} fill={purple} />
      ))}
      <path d="M381.5 286.5h11.5v9M629.5 286.5h10.5v18M385 381v-4h8M630 380h10M393 423v15M630 427h10" stroke="#fff" strokeWidth=".8" fill="none" />
      <path d="M640 340l8 11h-16z" fill="#ff0" />
      <path d="M952 340l8 11h-16z" fill="#ff0" />
      <Axis x={270} y={199} t="33" />
      <Axis x={629} y={199} t="35" />
      <Axis x={957} y={199} t="37" />
      <Axis x={400} y={511} t="34" />
      <Axis x={710} y={511} t="36" />
      <Axis x={957} y={511} t="37" />
      <CadText x={641} y={337}>4C22</CadText>
      <CadText x={913} y={337}>4C22</CadText>
      <CadText x={741} y={325}>KL75(1)[3629] 300*700</CadText>
      <CadText x={741} y={334}>C8#100/200(2) 2C22;6C25 2/4</CadText>
      <path d="M741 324v22" stroke="#ddd" strokeWidth=".8" />
      <text transform="translate(1038 357) rotate(-90)" fontSize="12" fill="#bbb" fontFamily="Liberation Sans, sans-serif">12500</text>
      <path d="M302 491v-26" stroke="#00ff00" strokeWidth="2" />
      <path d="M302 463l-2.5 6h5z" fill="#00ff00" />
      <path d="M302 491h30" stroke="#ff1010" strokeWidth="2" />
      <path d="M337 491l-6-2.5v5z" fill="#ff1010" />
      <text x={308} y={471} fontSize="8" fill="#888">Y</text>
      <text x={329} y={486} fontSize="8" fill="#a02020">X</text>
    </Canvas>
  );
}

const rebar = [
  { n: "1", name: "1跨.上通长筋1", d: "22", fig: "64", l: "330", mid: "8660", r: "330", f: "300-20+15*d+7900+500-20+15*d", desc: "支座宽-保护层+弯折+净长+支座宽-保护层+弯折", len: "9320", q: "2", unit: "27.774", tot: "55.547", conn: "电渣压力焊" },
  { n: "2*", name: "1跨.左支座筋1", d: "22", fig: "18", l: "330", mid: "2913", f: "300-20+15*d+7900/3", desc: "支座宽-保护层+弯折+搭接", len: "3243", q: "2", unit: "9.684", tot: "19.328", conn: "电渣压力焊", blue: true, focus: true },
  { n: "3", name: "1跨.右支座筋1", d: "22", fig: "18", l: "330", mid: "3113", f: "7900/3+500-20+15*d", desc: "搭接+支座宽-保护层+弯折", len: "3443", q: "2", unit: "10.26", tot: "20.52", conn: "电渣压力焊", blue: true },
  { n: "4", name: "1跨.下部钢筋1", d: "25", fig: "64", l: "375", mid: "8660", r: "375", f: "300-20+15*d+7900+500-20+15*d", desc: "支座宽-保护层+弯折+净长+支座宽-保护层+弯折", len: "9410", q: "4", unit: "36.229", tot: "144.914", conn: "直螺纹连接" },
  { n: "5", name: "1跨.下部钢筋5", d: "25", fig: "64", l: "375", mid: "8660", r: "375", f: "300-20+15*d+7900+500-20+15*d", desc: "支座宽-保护层+弯折+净长+支座宽-保护层+弯折", len: "9410", q: "2", unit: "36.229", tot: "72.457", conn: "直螺纹连接" },
];
const heads = ["", "筋号", "直径(mm)", "级别", "图号", "图形", "计算公式", "公式描述", "长度(mm)", "根数", "搭接", "损耗(%)", "单重(kg)", "总重(kg)", "钢筋归类", "搭接形式", ""];

function RebarGrid() {
  return (
    <GridPanel>
      <ToolRow $h={18} $pl={3}>
        {[17, 16, 16, 14].map((w, i) => (
          <Tool key={i} $w={w}><Glyph k="nav" c="#2a7ad8" s={8} /></Tool>
        ))}
        <Sep />
        <Tool $w={17}><Glyph k="tri" c="#2a7ad8" s={8} /></Tool>
        <Tool $w={10}><Glyph k="tri" c="#2a7ad8" s={8} /></Tool>
        <Sep />
        {renderTools(gridTools)}
        <Tool $w={19}>关闭</Tool>
        <Sep />
        <Tool $w={130}>单构件钢筋总量(kg)：363.676</Tool>
      </ToolRow>
      <GridArea>
        <Rows>
          <Row $head>
            {heads.map((h, i) => <Cell key={i} $mid $bar={i === 1}>{h}</Cell>)}
          </Row>
          {rebar.map((r) => (
            <Row key={r.n} $blue={r.blue}>
              <Cell $mid $bg={r.blue ? "#a6c6e8" : "#fff"} $c={r.blue ? "#701870" : "#222"}>{r.n}</Cell>
              <Cell $wrap $bar $bg={r.focus ? "#bde6c8" : ""} $focus={r.focus}>{r.name}</Cell>
              <Cell>{r.d}</Cell>
              <Cell $mid><Grade /></Cell>
              <Cell>{r.fig}</Cell>
              {r.r ? (
                <ShapeCell $pl={13}>{r.l}<Bracket $w={84} $closed><span>{r.mid}</span></Bracket>{r.r}</ShapeCell>
              ) : (
                <ShapeCell $pl={7}>{r.l}<Bracket $w={95}><span>{r.mid}</span></Bracket></ShapeCell>
              )}
              <Cell $wrap $small>{r.f}</Cell>
              <Cell $wrap>{r.desc}</Cell>
              <Cell>{r.len}</Cell>
              <Cell>{r.q}</Cell>
              <Cell>0</Cell>
              <Cell>0</Cell>
              <Cell>{r.unit}</Cell>
              <Cell>{r.tot}</Cell>
              <Cell>直筋</Cell>
              <Cell>{r.conn}</Cell>
              <Cell>普</Cell>
            </Row>
          ))}
        </Rows>
        <VScroll>
          <Chev>︿</Chev>
          <VThumb />
          <Chev $auto>﹀</Chev>
        </VScroll>
      </GridArea>
      <HScroll>
        <HThumb />
        <Chev $mr={14}>›</Chev>
      </HScroll>
    </GridPanel>
  );
}

const props = [
  ["1", "名称", "KL75(1)", 0, "sel"], ["2", "类别", "楼层框架梁", 1], ["3", "截面宽度(mm)", "300"], ["4", "截面高度(mm)", "700"], ["5", "轴线距梁左边线距", "(150)"],
  ["6", "跨数量", "1"], ["7", "箍筋", "G8#100/200(2)", 1], ["8", "肢数", "2", 1], ["9", "上部通长筋", "2G22", 1], ["10", "下部通长筋", "6G25 2/4", 1],
  ["11", "侧面构造或受扭筋", "", 1], ["12", "拉筋", "", 1], ["13", "其它箍筋", "", 1], ["14", "备注", ""], ["15", "其它属性", "", 2, "+"], ["23", "锚固搭接", "", 2, "+"], ["38", "显示样式", "", 2, "-"],
];

function PropertyEditor() {
  return (
    <PropPanel>
      <PropHead>属性编辑器</PropHead>
      <PropGrid>
        <PropCell $bg="#f5f5f5" />
        <PropCell $mid $bg="#f3f3f3">属性名称</PropCell>
        <PropCell $mid $bg="linear-gradient(#fde2ad, #f2bd62)" $c="#701870">属性值</PropCell>
        {props.map(([n, label, val, kind, extra]) => (
          <React.Fragment key={n}>
            <PropCell $mid $bg={extra === "sel" ? "#fbd79c" : "#f5f5f5"} $c={extra === "sel" ? "#a02020" : "#222"}>{n}</PropCell>
            <PropCell $pl={14} $bg={extra === "sel" ? "#0a78d0" : ""} $c={extra === "sel" ? "#fff" : kind === 1 ? "#2222e0" : kind === 2 ? "#999" : "#222"}>
              {extra === "+" || extra === "-" ? <PlusBox>{extra === "+" ? "+" : "−"}</PlusBox> : null}
              {label}
            </PropCell>
            <PropCell $gap={1} $bg={extra === "sel" ? "#d8eaf8" : ""}>
              {val.includes("G") && kind === 1 ? (
                <>
                  {val.split("G")[0]}<Grade />{val.split("G")[1]}
                </>
              ) : val}
            </PropCell>
          </React.Fragment>
        ))}
        <PropCell $mid $bg="#f5f5f5">39</PropCell>
        <PropCell $pl={20}>边框颜色</PropCell>
        <PropCell $pl={3}><Swatch $c="#00ff00" /></PropCell>
        <PropCell $mid $bg="#f5f5f5">40</PropCell>
        <PropCell $pl={20}>填充颜色</PropCell>
        <PropCell $pl={3}><Swatch $c="#ff00ff" /></PropCell>
        <PropCell $mid $bg="#f5f5f5">41</PropCell>
        <PropCell $pl={20}>不透明度</PropCell>
        <PropCell>100</PropCell>
      </PropGrid>
    </PropPanel>
  );
}

function CadApp() {
  return (
    <AppWindow>
      <ToolRow $h={25} $pl={8} $pt={4}>{renderTools(row1)}</ToolRow>
      <AppBody>
        <LeftPanels />
        <Center>
          <ToolRow $h={15} $pl={8}>{renderTools(row2)}</ToolRow>
          <ToolRow $h={15} $pl={8} $bg="#fbfbfb">
            <Combo $w={38}>负二层</Combo>
            <Combo $w={47}>常用构件i</Combo>
            <Combo $w={47}>梁</Combo>
            <Combo $w={47} $m={3}>KL-1</Combo>
            <Combo $w={46} $m={7}>分层1</Combo>
            {renderTools(row3b)}
          </ToolRow>
          <ToolRow $h={17} $pl={8}>
            {renderTools(row4a)}
            <DropMark $l={3} $r={8} />
            {renderTools(row4b)}
            <DropMark $r={5} />
            <Combo $w={36} $m={5} />
            {renderTools(row4c)}
            <span>»</span>
          </ToolRow>
          <Drawing />
          <ToolRow $h={17} $pl={10}>
            {renderTools(snapA)}
            <Tool $w={10} />
            {renderTools(snapB)}
            <Combo $w={38} $m={5}>不偏移</Combo>
            <Tool $w={14}>X=</Tool>
            <NumBox $w={39}>0</NumBox>
            <Tool $w={17}>mm</Tool>
            <Tool $w={14}>Y=</Tool>
            <NumBox $w={38} $m={2}>0</NumBox>
            <Tool $w={20}>mm</Tool>
            <CheckBox />
            <Tool $w={20}>旋转</Tool>
            <NumBox $w={45}>0.000</NumBox>
            <span>°</span>
          </ToolRow>
          <RebarGrid />
        </Center>
        <PropertyEditor />
      </AppBody>
    </AppWindow>
  );
}

function BottomBars() {
  const chips = ["支座负筋", "端支座负筋", "钢筋集中标注", "支座负筋原位标注", "支座负筋图片", "条形基础", "框架柱钢筋计算", "钢筋加密区"];
  return (
    <>
      <RelatedBar>
        <PlusCell><Plus size={19} strokeWidth={3} /></PlusCell>
        <SoBrand>O.</SoBrand>
        <Chips>{chips.map((c) => <Chip key={c}>{c}</Chip>)}</Chips>
        <RelatedTools>
          <Settings size={17} strokeWidth={1.2} />
          <X size={15} strokeWidth={1.2} />
        </RelatedTools>
      </RelatedBar>
      <StatusBar>
        <StatusItem $w={98}>
          <svg width="16" height="17" viewBox="0 0 16 16"><path d="M1 5h14v3H1zM2 8h12v7H2zM8 5v10M8 5C5 1 3 2 4 4M8 5c3-4 5-3 4-1" fill="none" stroke="#f4a488" /></svg>
          今日优选
        </StatusItem>
        <StatusItem $w={16}><ChevronDown size={11} /></StatusItem>
        <Headline>AOA雪炫又瘦了？拿出过去照片一比对真的瘦了好多！</Headline>
        <StatusGap />
        <StatusItem $w={69}>
          <svg width="15" height="18" viewBox="0 0 15 18"><rect x="1" y="1" width="13" height="16" rx="1" fill="none" stroke="#22b455" strokeWidth="1.4" /><path d="M5 4l5 5-5 5z" fill="#22b455" /></svg>
          快剪辑
        </StatusItem>
        <StatusItem $w={81}>
          <svg width="17" height="17" viewBox="0 0 16 16"><circle cx="8" cy="8" r="7" fill="none" stroke="#22b455" strokeWidth="1.3" /><path d="M6 5l5 3-5 3z" fill="none" stroke="#22b455" /></svg>
          今日直播
        </StatusItem>
        <StatusItem $w={78}>
          <svg width="15" height="16" viewBox="0 0 15 16"><rect x="1" y="1" width="13" height="14" fill="none" stroke="#22b455" strokeWidth="1.4" /><path d="M4 5h3v3H4zM9 5h2M9 8h2M4 11h7" stroke="#22b455" fill="none" /></svg>
          热点资讯
        </StatusItem>
        <StatusItem $w={37} $pl={7} $c="#888"><Clock size={15} strokeWidth={1} /></StatusItem>
        <StatusItem $w={33} $pl={7} $c="#888"><Rocket size={15} strokeWidth={1} /></StatusItem>
        <StatusItem $w={58} $pl={5} $c="#555"><ArrowDown size={16} strokeWidth={1} />下载</StatusItem>
        <StatusItem $w={38} $pl={6} $c="#888">
          <svg width="16" height="16" viewBox="0 0 16 16"><path d="M3 9h10c0-4-2-6-5-6S3 6 3 9s2 5 5 5c2 0 4-1 5-3M2 14C5 8 9 4 14 2" fill="none" stroke="#888" /></svg>
        </StatusItem>
        <StatusItem $w={37} $pl={6} $c="#888"><Square size={14} strokeWidth={1} /></StatusItem>
        <StatusItem $w={33} $pl={5} $c="#888"><Volume1 size={16} strokeWidth={1} /></StatusItem>
        <StatusItem $w={28} $pl={6} $c="#888"><Search size={13} strokeWidth={1} /></StatusItem>
        <StatusItem $w={40} $f={13}>110%</StatusItem>
      </StatusBar>
      <Taskbar>
        <StartCell>
          <svg width="16" height="16" viewBox="0 0 16 16"><path d="M0 2.200 6.600 1.300v6.200H0zM7.400 1.200 16 0v7.500H7.400zM0 8.500h6.600v6.200L0 13.800zM7.400 8.500H16V16l-8.600-1.200z" fill="#fff" /></svg>
        </StartCell>
        <TaskSearch>
          <svg width="18" height="18" viewBox="0 0 18 18"><circle cx="9" cy="9" r="7.500" fill="none" stroke="#ddd" strokeWidth="2" /></svg>
          <TaskHint>在这里输入你要搜索的内容</TaskHint>
          <svg width="10" height="18" viewBox="0 0 10 18"><rect x="2.500" y="1" width="5" height="10" rx="2.500" fill="none" stroke="#888" /><path d="M0.500 7a4.500 4.500 0 0 0 9 0M5 12v4M2 16.500h6" fill="none" stroke="#888" /></svg>
        </TaskSearch>
        <TaskIcon $w={47}>
          <svg width="20" height="16" viewBox="0 0 20 16"><rect x="5" y=".5" width="10" height="15" fill="none" stroke="#fff" /><path d="M3 2.500H.5v11H3M17 2.500h2.500v11H17" fill="none" stroke="#fff" /></svg>
        </TaskIcon>
        <TaskIcon $w={54}>
          <svg width="22" height="26" viewBox="0 0 22 26"><path d="M11 13C4 14 0 10 1 5s9-6 10 2zM11 13c7-1 10 3 9 8s-9 6-10-2zM11 13c1-7 5-11 9-9s2 9-5 9zM11 13c-1 7-5 11-9 9s-2-9 5-9z" fill="#e8e8e8" /></svg>
        </TaskIcon>
        <TaskIcon $w={52}>
          <svg width="24" height="28" viewBox="0 0 24 28"><path d="M3 15h16c0-5-3-8-8-8s-8 4-8 9 4 8 8 8c3 0 6-1 8-4" fill="none" stroke="#eee" strokeWidth="2.600" /><path d="M2 22C6 12 14 5 22 2" fill="none" stroke="#eee" strokeWidth="1.400" /></svg>
        </TaskIcon>
        <TaskIcon $w={48}>
          <svg width="20" height="22" viewBox="0 0 20 22"><path d="M15 3a8.500 8.500 0 1 0 3 10H10M6 11a4 4 0 0 1 7-3" fill="none" stroke="#ddd" strokeWidth="1.600" /></svg>
        </TaskIcon>
        <TaskIcon $w={55}>
          <svg width="22" height="24" viewBox="0 0 22 24"><path d="M1 12C1 5 6 1 12 1c6 0 9 4 9 9v3H8c0 5 8 6 12 3v5c-7 3-19 2-19-9zm7-3h7c0-4-7-4-7 0z" fill="#0f78d8" /></svg>
        </TaskIcon>
        <TaskIcon $w={46}>
          <svg width="26" height="28" viewBox="0 0 26 28"><path d="M5 15h15c0-5-3-8-7-8s-7 4-7 9 3 8 7 8c3 0 5-1 7-4" fill="none" stroke="#1e88dc" strokeWidth="3.200" /><path d="M2 24C1 16 12 4 24 1c2 3-1 8-3 10" fill="none" stroke="#f2c43a" strokeWidth="1.600" /></svg>
        </TaskIcon>
        <TaskIcon $w={48}>
          <svg width="24" height="22" viewBox="0 0 24 22"><path d="M1 3h8l2 3h12v15H1z" fill="#f3cf68" /><path d="M5 13h14v8H5z" fill="#8cc6ec" /><path d="M9 17h6v4H9z" fill="#2e94d8" /></svg>
        </TaskIcon>
        <TaskIcon $w={39} $line $m={5}>
          <svg width="24" height="28" viewBox="0 0 24 28"><path d="M2 4c7-4 17-2 20 6 2 7-3 14-9 16 3-3 5-6 5-10H10c0 4 3 5 6 4-4 4-14 1-14-6 0-4 3-7 5-8-4 0-5-2-5-2z" fill="#1c8fe8" /></svg>
        </TaskIcon>
        <TaskIcon $w={47} $on $line $m={5}>
          <svg width="26" height="28" viewBox="0 0 26 28"><ellipse cx="13" cy="14" rx="11" ry="12" fill="#e8f4d8" /><path d="M6 15h14c0-5-3-8-7-8s-7 4-7 8 3 8 7 8c3 0 5-1 7-3" fill="none" stroke="#52b22c" strokeWidth="3" /></svg>
        </TaskIcon>
        <TaskIcon $w={39} $line $m={5}>
          <svg width="24" height="26" viewBox="0 0 24 26"><rect width="24" height="26" rx="6" fill="#0f8fee" /><path d="M12 5a3 3 0 1 1 3 3v5H6a2.500 2.500 0 1 1 0-3h12a2.500 2.500 0 1 1 0 3h-6v8" fill="none" stroke="#fff" strokeWidth="1.600" /></svg>
        </TaskIcon>
        <TaskIcon $w={39} $line $m={9}>
          <svg width="24" height="28" viewBox="0 0 24 28"><rect width="24" height="28" fill="#f2a12a" /><rect x="3" y="4" width="18" height="21" fill="#fde7ae" /><path d="M6 10h8M6 14h10M6 18h8" stroke="#a07020" /><path d="M23 1 13 17" stroke="#c0481a" strokeWidth="2.400" /></svg>
        </TaskIcon>
        <TaskText $w={58} $f={13}>链接</TaskText>
        <TaskText $w={56} $f={12.5}>14%<br />CPU使用</TaskText>
        <TaskIcon $w={34} $m={4}><ChevronDown size={17} strokeWidth={1.4} style={{ transform: "rotate(180deg)" }} /></TaskIcon>
        <TaskIcon $w={16}>
          <svg width="16" height="14" viewBox="0 0 16 14"><rect x="1" y="4" width="12" height="8" fill="none" stroke="#eee" /><rect x="2" y="5" width="5" height="6" fill="#eee" /><path d="M4 0v4M7 0v4M14 7v2" stroke="#eee" /></svg>
        </TaskIcon>
        <TaskIcon $w={32}>
          <svg width="16" height="14" viewBox="0 0 16 14"><path d="M1 13C2 6 7 2 15 1M5 13c1-3 4-6 10-7M9 13c1-2 3-3 6-3" fill="none" stroke="#ddd" strokeDasharray="2 1" /></svg>
        </TaskIcon>
        <TaskIcon $w={16}><Volume1 size={17} strokeWidth={1.2} color="#eee" /></TaskIcon>
        <TaskIcon $w={38}>
          <svg width="23" height="14" viewBox="0 0 23 14"><rect x=".5" y=".5" width="22" height="13" fill="none" stroke="#eee" /><path d="M3 4h17M3 7h17M6 10.500h11" stroke="#eee" strokeDasharray="1.500 1" /></svg>
        </TaskIcon>
        <TaskText $w={18} $f={13.5}>中</TaskText>
        <TaskIcon $w={40}>
          <svg width="17" height="17" viewBox="0 0 16 16"><rect x="1" y="1" width="14" height="14" rx="3" fill="#ea3f1a" /><path d="M11 4H6L5 8h6l-1 4H4" fill="none" stroke="#fff" strokeWidth="2" /></svg>
        </TaskIcon>
        <TaskText $w={66} $f={12.5}>9:57<br />2018/6/3</TaskText>
        <TaskIcon $w={50}>
          <svg width="17" height="17" viewBox="0 0 16 16"><path d="M1 1h14v11h-4l-3 3v-3H1z" fill="none" stroke="#fff" /></svg>
        </TaskIcon>
      </Taskbar>
    </>
  );
}

const arrowPts = ([tx, ty], [ax, ay], head = 5.5, neck = 2.2, len = 13) => {
  const l = Math.hypot(ax - tx, ay - ty);
  const ux = (ax - tx) / l;
  const uy = (ay - ty) / l;
  const at = (d, s) => `${tx + ux * d - uy * s},${ty + uy * d + ux * s}`;
  return [at(0, 0), at(len, head), at(len - 2, neck), `${ax},${ay}`, at(len - 2, -neck), at(len, -head)].join(" ");
};
const marks = [
  [[662, 343], [690, 379]],
  [[917, 345], [906, 395]],
  [[1263, 258], [1330, 255], 5, 2, 13],
  [[858, 591], [903, 592], 4, 1.4, 13],
  [[856, 612], [928, 618], 6, 2, 15],
];

export default function App() {
  return (
    <Page>
      <GlobalStyle />
      <TopBars />
      <Main>
        <Dock />
        <PageArea>
          <DarkBand>
            <svg width="88" height="22" viewBox="0 0 88 22" style={{ flex: "none" }}>
              <ellipse cx="44" cy="4" rx="36" ry="30" fill="#c29a33" />
              <path d="M14 22 20 6h8l4 16zM60 22l4-16h8l6 16z" fill="#2f4d70" />
              <rect x="34" y="12" width="20" height="10" fill="#2f4d70" />
            </svg>
            <BandTitle>答疑解惑</BandTitle>
            <BandSearch>请输入搜索关键字</BandSearch>
            <BandButton $w={101} $m={0}><Search size={16} strokeWidth={2} />我来搜</BandButton>
            <BandButton $w={100} $m={8}>? 我来问</BandButton>
            <BandButton $w={89} $m={8}>我来答</BandButton>
          </DarkBand>
          <CadApp />
        </PageArea>
        <PageScroll>
          <UpTri />
          <ScrollThumb />
        </PageScroll>
      </Main>
      <BottomBars />

      <Logo />
      <ScoreBadge>76</ScoreBadge>
      <CloseButton><X size={26} strokeWidth={2.2} /></CloseButton>
      <FloatDock>
        <TopButton>
          <svg width="24" height="14" viewBox="0 0 24 14"><path d="M0 1h24M3 13 12 5l9 8" fill="none" stroke="#fff" strokeWidth="2" /></svg>
        </TopButton>
        <OrangeButton>{"意见\n反馈"}</OrangeButton>
        <OrangeButton>{"关注\n我们"}</OrangeButton>
        <OrangeButton>{"Q Q\n咨询"}</OrangeButton>
      </FloatDock>
      <EdgeAd>石<br />力</EdgeAd>
      <Overlay viewBox="0 0 1366 768">
        <rect x="298" y="583" width="594" height="4" fill="#f00" />
        {marks.map(([t, a, h, n, l], i) => (
          <polygon key={i} points={arrowPts(t, a, h, n, l)} fill="#f23a2e" />
        ))}
        <path d="M886 467 872 515 858 566" stroke="#f00" strokeWidth="3" fill="none" />
        <polygon points="854,579 851,563 863,566" fill="#f00" />
        <path d="M1056 676q7-3 14-3" stroke="#f2603a" strokeWidth="2" fill="none" />
      </Overlay>
      <RedNote $x={797} $y={418}>4C22包括了二根通长钢筋的</RedNote>
      <RedNote $x={905} $y={455}>所以左右支座负筋是2c22</RedNote>
    </Page>
  );
}
